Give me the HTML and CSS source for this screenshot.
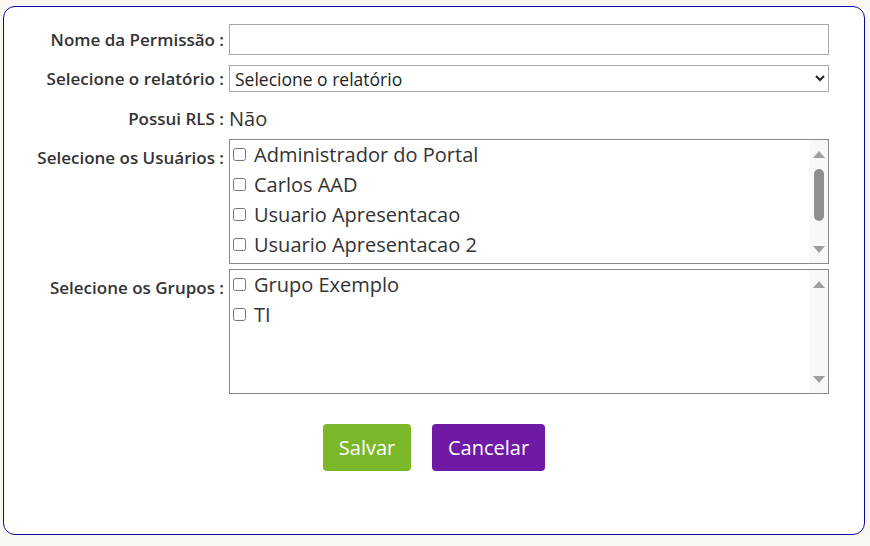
FILE: index.html
```html
<!DOCTYPE html>
<html lang="pt">
<head>
<meta charset="utf-8">
<link rel="stylesheet" href="styles.css">
</head>
<body>
<div class="card">
  <form class="form">
    <div class="row r-name">
      <label class="lbl">Nome da Permissão :</label>
      <input class="txt" type="text">
    </div>
    <div class="row r-rep">
      <label class="lbl">Selecione o relatório :</label>
      <select class="sel"><option>Selecione o relatório</option></select>
    </div>
    <div class="row r-rls">
      <label class="lbl">Possui RLS :</label>
      <span class="val">Não</span>
    </div>
    <div class="row r-list">
      <label class="lbl top">Selecione os Usuários :</label>
      <div class="box">
        <div class="list">
          <div class="item"><input type="checkbox"><span>Administrador do Portal</span></div>
          <div class="item"><input type="checkbox"><span>Carlos AAD</span></div>
          <div class="item"><input type="checkbox"><span>Usuario Apresentacao</span></div>
          <div class="item"><input type="checkbox"><span>Usuario Apresentacao 2</span></div>
        </div>
        <div class="sb">
          <div class="arrow up"></div>
          <div class="track"><div class="thumb"></div></div>
          <div class="arrow down"></div>
        </div>
      </div>
    </div>
    <div class="row r-list">
      <label class="lbl top">Selecione os Grupos :</label>
      <div class="box">
        <div class="list">
          <div class="item"><input type="checkbox"><span>Grupo Exemplo</span></div>
          <div class="item"><input type="checkbox"><span>TI</span></div>
        </div>
        <div class="sb">
          <div class="arrow up"></div>
          <div class="track"></div>
          <div class="arrow down"></div>
        </div>
      </div>
    </div>
    <div class="actions">
      <button type="button" class="btn save">Salvar</button>
      <button type="button" class="btn cancel">Cancelar</button>
    </div>
  </form>
</div>
</body>
</html>
```
FILE: styles.css
```css
html, body {
  margin: 0;
  padding: 0;
  background: #faf6f1;
  font-family: "Open Sans", "Noto Sans", sans-serif;
  color: #333;
}
body {
  padding: 6px 5px 11px 3px;
}
.card {
  box-sizing: border-box;
  width: 862px;
  height: 529px;
  background: #fff;
  border: 1.5px solid #0c0a9e;
  border-radius: 12px;
  padding-top: 17px;
}
.form {
  display: flex;
  flex-direction: column;
}
.row {
  display: grid;
  grid-template-columns: 220px 600px;
  column-gap: 5px;
  align-items: center;
}
.lbl {
  text-align: right;
  font-size: 17px;
  font-weight: 600;
  color: #333;
  white-space: nowrap;
}
.lbl.top {
  align-self: start;
  padding-top: 7px;
}
.r-name { height: 31px; margin-bottom: 10px; }
.r-rep { height: 27px; }
.r-rls { height: 34px; margin-top: 9px; margin-bottom: 4px; }
.r-list { margin-bottom: 5px; }
.txt {
  box-sizing: border-box;
  width: 600px;
  height: 31px;
  border: 1px solid #a9a9a9;
  border-radius: 0;
  padding: 0 6px;
  font-family: inherit;
  font-size: 17px;
}
.sel {
  box-sizing: border-box;
  width: 600px;
  height: 27px;
  border: 1px solid #a9a9a9;
  border-radius: 0;
  background: #fff;
  font-family: inherit;
  font-size: 17.5px;
  color: #222;
  padding: 0 1px;
}
.val {
  font-size: 20px;
  color: #333;
}
.box {
  box-sizing: border-box;
  width: 600px;
  height: 125px;
  border: 1px solid #8a8a8a;
  display: flex;
}
.list {
  flex: 1;
  overflow: hidden;
}
.item {
  box-sizing: border-box;
  display: flex;
  align-items: center;
  height: 30px;
  padding-bottom: 2px;
  font-size: 20px;
  color: #333;
  white-space: nowrap;
}
.item input {
  width: 13px;
  height: 13px;
  margin: 0 8px 0 3px;
}
.sb {
  width: 19px;
  background: #f8f8f8;
  display: flex;
  flex-direction: column;
  align-items: center;
}
.arrow {
  width: 0;
  height: 0;
  border-left: 6px solid transparent;
  border-right: 6px solid transparent;
}
.arrow.up {
  margin-top: 11px;
  border-bottom: 7px solid #9f9f9f;
}
.arrow.down {
  margin-bottom: 10px;
  border-top: 7px solid #9f9f9f;
}
.track {
  flex: 1;
  width: 100%;
  display: flex;
  justify-content: center;
  padding-top: 11px;
}
.thumb {
  width: 10px;
  height: 52px;
  border-radius: 5px;
  background: #8f8f8f;
}
.actions {
  display: flex;
  justify-content: center;
  gap: 21px;
  margin-top: 25px;
}
.btn {
  height: 47px;
  border: none;
  border-radius: 4px;
  color: #fff;
  font-family: inherit;
  font-size: 20px;
  padding: 0;
}
.save { background: #7ab82a; width: 88px; }
.cancel { background: #6f1aa5; width: 113px; }
```
